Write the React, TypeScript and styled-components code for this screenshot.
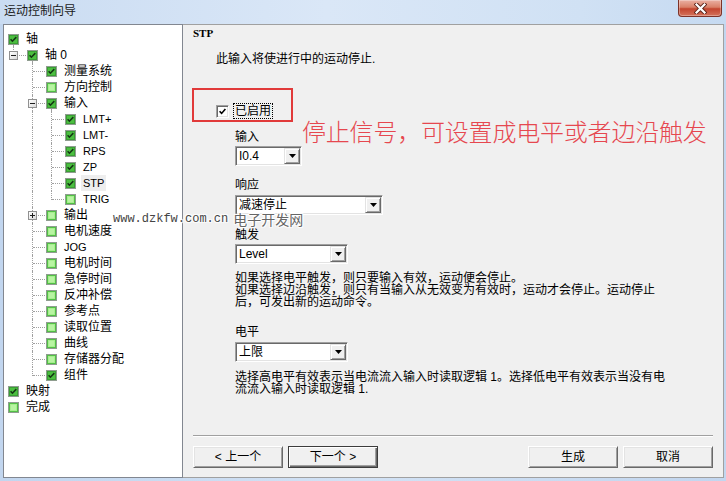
import React from 'react';
import styled, { createGlobalStyle, css } from 'styled-components';

const GlobalStyle = createGlobalStyle`
  html, body { margin: 0; padding: 0; }
  body {
    width: 726px; height: 481px; overflow: hidden;
    font-family: "Liberation Sans", "Noto Sans CJK SC", sans-serif;
    font-size: 12px; color: #000;
  }
`;

const UI = `"Liberation Sans", "Noto Sans CJK SC", sans-serif`;

const Window = styled.div`
  position: relative;
  width: 726px;
  height: 481px;
  display: flex;
  flex-direction: column;
  background: linear-gradient(to right, #c2d6ef, #d2e2f5 50%, #c2d6ef);
  overflow: hidden;
`;

const TitleBar = styled.div`
  height: 24px;
  flex: none;
  display: flex;
  align-items: flex-start;
  background: linear-gradient(to right, #cadcf2, #dae7f7 45%, #d0e1f4 80%, #c6daf1);
`;

const Title = styled.div`
  flex: 1;
  padding: 4px 0 0 4px;
  font-family: "Noto Sans CJK SC", sans-serif;
  font-size: 12px;
  line-height: 12px;
  color: #1a1a1a;
`;

const CloseButton = styled.div`
  width: 44px;
  height: 17px;
  margin-right: 4px;
  box-sizing: border-box;
  border: 1px solid #7d3228;
  border-top: none;
  border-radius: 0 0 4px 4px;
  background: linear-gradient(#eab0a3, #d98068 45%, #c3452f 55%, #d4735c);
  box-shadow: inset 0 0 0 1px rgba(255, 255, 255, 0.3);
  display: flex;
  align-items: center;
  justify-content: center;
`;

const Body = styled.div`
  flex: 1;
  min-height: 0;
  display: flex;
  margin: 0 2px 3px 3px;
`;

const TreePane = styled.div`
  width: 180px;
  flex: none;
  box-sizing: border-box;
  background: #fff;
  border: 1px solid #828790;
  padding-top: 6px;
  display: flex;
  flex-direction: column;
`;

const Row = styled.div`
  height: 16px;
  display: flex;
  align-items: flex-start;
  white-space: nowrap;
  flex: none;
`;

type GuideKind = 'none' | 'pass' | 'tee' | 'elbow';

const Guide = styled.span<{ $kind: GuideKind }>`
  position: relative;
  flex: none;
  width: 19px;
  height: 16px;
  ${(p) =>
    p.$kind !== 'none' &&
    css`
      &::before {
        content: "";
        position: absolute;
        left: 9px;
        top: 0;
        width: 0;
        height: ${p.$kind === 'elbow' ? '9px' : '16px'};
        border-left: 1px dotted #a0a0a0;
      }
    `}
  ${(p) =>
    (p.$kind === 'tee' || p.$kind === 'elbow') &&
    css`
      &::after {
        content: "";
        position: absolute;
        left: 10px;
        right: -3px;
        top: 8px;
        height: 0;
        border-top: 1px dotted #a0a0a0;
      }
    `}
`;

const Expander = styled.span<{ $open: boolean }>`
  position: absolute;
  left: 5px;
  top: 4px;
  width: 9px;
  height: 9px;
  box-sizing: border-box;
  border: 1px solid #919191;
  background: linear-gradient(135deg, #ffffff, #dadada);
  z-index: 1;
  &::before {
    content: "";
    position: absolute;
    left: 1px;
    top: 3px;
    width: 5px;
    height: 1px;
    background: #1e1e1e;
  }
  ${(p) =>
    !p.$open &&
    css`
      &::after {
        content: "";
        position: absolute;
        left: 3px;
        top: 1px;
        width: 1px;
        height: 5px;
        background: #1e1e1e;
      }
    `}
`;

const StateWrap = styled.span<{ $childLine: boolean }>`
  position: relative;
  flex: none;
  width: 11px;
  height: 11px;
  margin: 3px 0 0 4px;
  display: block;
  svg { display: block; }
  ${(p) =>
    p.$childLine &&
    css`
      &::after {
        content: "";
        position: absolute;
        left: 5px;
        top: 11px;
        height: 2px;
        border-left: 1px dotted #a0a0a0;
      }
    `}
`;

const NodeLabel = styled.span<{ $latin?: boolean; $selected?: boolean }>`
  margin-left: 5px;
  padding: 0 2px;
  height: 16px;
  font-family: ${UI};
  font-size: ${(p) => (p.$latin ? '11px' : '12px')};
  line-height: 16px;
  color: #000;
  background: ${(p) => (p.$selected ? '#eeeeee' : 'transparent')};
`;

const Panel = styled.div`
  position: relative;
  flex: 1;
  box-sizing: border-box;
  background: #f0f0f0;
  border: 1px solid #a0a0a0;
  border-left: none;
  padding: 2px 10px 9px 10px;
  display: flex;
  flex-direction: column;
`;

const Heading = styled.div`
  font-family: "Liberation Serif", serif;
  font-weight: bold;
  font-size: 11px;
  line-height: 13px;
`;

const Description = styled.div`
  margin: 13px 0 0 23px;
  font-family: ${UI};
  font-size: 12px;
  line-height: 13px;
`;

const Highlight = styled.div`
  margin: 22px 0 0 -1px;
  width: 101px;
  height: 34px;
  box-sizing: border-box;
  border: 2px solid #e13a3a;
  padding: 12px 0 0 22px;
  display: flex;
  align-items: center;
  align-self: flex-start;
`;

const ClassicCheck = styled.span`
  width: 13px;
  height: 13px;
  flex: none;
  box-sizing: border-box;
  background: #fff;
  border: 1px solid;
  border-color: #a0a0a0 #fff #fff #a0a0a0;
  box-shadow: inset 1px 1px 0 #696969, inset -1px -1px 0 #e3e3e3;
  display: flex;
  align-items: center;
  justify-content: center;
`;

const FocusLabel = styled.span`
  margin-left: 4px;
  padding: 0 1px;
  border: 1px dotted #000;
  font-family: ${UI};
  font-size: 12px;
  line-height: 14px;
`;

const FieldLabel = styled.div<{ $mt: number }>`
  margin: ${(p) => p.$mt}px 0 0 42px;
  font-family: ${UI};
  font-size: 12px;
  line-height: 13px;
`;

const Combo = styled.div<{ $w: number; $mt: number }>`
  width: ${(p) => p.$w}px;
  height: 20px;
  margin: ${(p) => p.$mt}px 0 0 42px;
  flex: none;
  box-sizing: border-box;
  background: #fff;
  border: 1px solid;
  border-color: #a0a0a0 #fff #fff #a0a0a0;
  box-shadow: inset 1px 1px 0 #696969, inset -1px -1px 0 #e3e3e3;
  padding: 0 1px 0 3px;
  display: flex;
  align-items: center;
`;

const ComboValue = styled.span`
  flex: 1;
  font-family: ${UI};
  font-size: 12px;
  line-height: 16px;
  white-space: nowrap;
  overflow: hidden;
`;

const ComboButton = styled.span`
  width: 16px;
  height: 16px;
  flex: none;
  box-sizing: border-box;
  background: #f0f0f0;
  border: 1px solid;
  border-color: #e3e3e3 #696969 #696969 #e3e3e3;
  box-shadow: inset 1px 1px 0 #fff, inset -1px -1px 0 #a0a0a0;
  display: flex;
  align-items: center;
  justify-content: center;
  svg { display: block; }
`;

const Paragraph = styled.div<{ $mt: number }>`
  margin: ${(p) => p.$mt}px 0 0 42px;
  font-family: ${UI};
  font-size: 12px;
  line-height: 12px;
  white-space: nowrap;
`;

const Spacer = styled.div`
  flex: 1;
`;

const Separator = styled.div`
  height: 0;
  border-top: 1px solid #a0a0a0;
  border-bottom: 1px solid #fff;
`;

const ButtonRow = styled.div`
  margin-top: 9px;
  display: flex;
  gap: 5px;
`;

const Button = styled.button<{ $default?: boolean; $push?: boolean }>`
  width: 90px;
  height: 22px;
  box-sizing: border-box;
  padding: 0;
  margin: 0 0 0 ${(p) => (p.$push ? 'auto' : '0')};
  font-family: ${UI};
  font-size: 12px;
  line-height: 16px;
  color: #000;
  background: #f0f0f0;
  border: 1px solid;
  border-color: ${(p) => (p.$default ? '#3c3c3c' : '#fff #696969 #696969 #fff')};
  box-shadow: ${(p) =>
    p.$default
      ? 'inset 1px 1px 0 #fff, inset -1px -1px 0 #696969, inset -2px -2px 0 #a0a0a0'
      : 'inset 1px 1px 0 #e3e3e3, inset -1px -1px 0 #a0a0a0'};
`;

const Annotation = styled.div`
  position: absolute;
  left: 119px;
  top: 94px;
  font-family: "Noto Sans CJK SC", sans-serif;
  font-weight: 300;
  font-size: 24px;
  line-height: 24px;
  letter-spacing: -0.2px;
  color: #e6474f;
  white-space: nowrap;
`;

const Watermark = styled.div`
  position: absolute;
  left: 113px;
  top: 210px;
  z-index: 10;
  display: flex;
  align-items: center;
  white-space: nowrap;
  text-shadow: 0 0 1px #fff, 0 0 2px #fff, 1px 1px 1px #fff, -1px -1px 1px #fff, 1px -1px 1px #fff, -1px 1px 1px #fff;
`;

const WatermarkUrl = styled.span`
  font-family: "Liberation Mono", monospace;
  font-size: 12px;
  line-height: 18px;
  color: #444;
`;

const WatermarkName = styled.span`
  margin-left: 5px;
  font-family: "Noto Sans CJK SC", sans-serif;
  font-size: 14px;
  line-height: 18px;
  color: #666;
`;

type TreeNode = {
  label: string;
  checked: boolean;
  latin?: boolean;
  selected?: boolean;
  collapsed?: boolean;
  children?: TreeNode[];
};

type FlatRow = {
  key: string;
  label: string;
  checked: boolean;
  latin?: boolean;
  selected?: boolean;
  guides: GuideKind[];
  expander?: 'minus' | 'plus';
  childLine: boolean;
};

const leaf = (label: string, checked = false, latin = false, selected = false): TreeNode => ({
  label,
  checked,
  latin,
  selected,
});

const tree: TreeNode[] = [
  {
    label: '轴',
    checked: true,
    children: [
      {
        label: '轴 0',
        checked: true,
        children: [
          leaf('测量系统', true),
          leaf('方向控制'),
          {
            label: '输入',
            checked: true,
            children: [
              leaf('LMT+', true, true),
              leaf('LMT-', true, true),
              leaf('RPS', true, true),
              leaf('ZP', true, true),
              leaf('STP', true, true, true),
              leaf('TRIG', false, true),
            ],
          },
          { label: '输出', checked: false, collapsed: true, children: [leaf('x')] },
          leaf('电机速度'),
          leaf('JOG', false, true),
          leaf('电机时间'),
          leaf('急停时间'),
          leaf('反冲补偿'),
          leaf('参考点'),
          leaf('读取位置'),
          leaf('曲线'),
          leaf('存储器分配'),
          leaf('组件', true),
        ],
      },
    ],
  },
  leaf('映射', true),
  leaf('完成'),
];

function flatten(nodes: TreeNode[], level: number, anc: boolean[], out: FlatRow[], prefix: string) {
  nodes.forEach((n, i) => {
    const hasNext = i < nodes.length - 1;
    const guides: GuideKind[] = [];
    if (level >= 1) {
      for (let c = 0; c < level - 1; c++) guides.push(anc[c] ? 'pass' : 'none');
      guides.push(hasNext ? 'tee' : 'elbow');
    }
    const expanded = !!n.children && !n.collapsed;
    out.push({
      key: `${prefix}-${i}`,
      label: n.label,
      checked: n.checked,
      latin: n.latin,
      selected: n.selected,
      guides,
      expander: n.children && level >= 1 ? (expanded ? 'minus' : 'plus') : undefined,
      childLine: expanded,
    });
    if (expanded) flatten(n.children!, level + 1, level >= 1 ? [...anc, hasNext] : anc, out, `${prefix}-${i}`);
  });
}

const rows: FlatRow[] = [];
flatten(tree, 0, [], rows, 'n');

function StateIcon({ checked }: { checked: boolean }) {
  return (
    <svg width="11" height="11" viewBox="0 0 11 11">
      <rect x="0.5" y="0.5" width="10" height="10" fill="#fff" stroke="#8f9d8f" />
      {checked ? (
        <>
          <rect x="1.5" y="1.5" width="8" height="8" fill="#4cbf40" stroke="#3a9f34" />
          <path d="M2.6 5.3 L4.4 7.2 L8.3 3.1" fill="none" stroke="#143814" strokeWidth="1.6" />
        </>
      ) : (
        <>
          <rect x="1.5" y="1.5" width="8" height="8" fill="#a6ee8e" stroke="#52c046" />
          <rect x="3" y="3" width="5" height="5" fill="#b8f4a2" />
        </>
      )}
    </svg>
  );
}

function ComboBox({ value, width, mt }: { value: string; width: number; mt: number }) {
  return (
    <Combo $w={width} $mt={mt}>
      <ComboValue>{value}</ComboValue>
      <ComboButton>
        <svg width="7" height="4" viewBox="0 0 7 4">
          <path d="M0 0 H7 L3.5 4 Z" fill="#000" />
        </svg>
      </ComboButton>
    </Combo>
  );
}

export default function App() {
  return (
    <>
      <GlobalStyle />
      <Window>
        <TitleBar>
          <Title>运动控制向导</Title>
          <CloseButton>
            <svg width="13" height="11" viewBox="0 0 13 11">
              <path d="M2.5 1.5 L10.5 9.5 M10.5 1.5 L2.5 9.5" stroke="#5b2219" strokeWidth="4" strokeLinecap="square" />
              <path d="M2.5 1.5 L10.5 9.5 M10.5 1.5 L2.5 9.5" stroke="#fff" strokeWidth="2.2" strokeLinecap="square" />
            </svg>
          </CloseButton>
        </TitleBar>
        <Body>
          <TreePane>
            {rows.map((r) => (
              <Row key={r.key}>
                {r.guides.map((g, gi) => (
                  <Guide key={gi} $kind={g}>
                    {gi === r.guides.length - 1 && r.expander && <Expander $open={r.expander === 'minus'} />}
                  </Guide>
                ))}
                <StateWrap $childLine={r.childLine}>
                  <StateIcon checked={r.checked} />
                </StateWrap>
                <NodeLabel $latin={r.latin} $selected={r.selected}>
                  {r.label}
                </NodeLabel>
              </Row>
            ))}
          </TreePane>
          <Panel>
            <Heading>STP</Heading>
            <Description>此输入将使进行中的运动停止.</Description>
            <Highlight>
              <ClassicCheck>
                <svg width="7" height="7" viewBox="0 0 7 7">
                  <path d="M0.6 3.2 L2.6 5.4 L6.4 0.9" fill="none" stroke="#000" strokeWidth="1.6" />
                </svg>
              </ClassicCheck>
              <FocusLabel>已启用</FocusLabel>
            </Highlight>
            <FieldLabel $mt={9}>输入</FieldLabel>
            <ComboBox value="I0.4" width={67} mt={2} />
            <FieldLabel $mt={13}>响应</FieldLabel>
            <ComboBox value="减速停止" width={148} mt={3} />
            <FieldLabel $mt={14}>触发</FieldLabel>
            <ComboBox value="Level" width={113} mt={2} />
            <Paragraph $mt={8}>
              如果选择电平触发，则只要输入有效，运动便会停止。
              <br />
              如果选择边沿触发，则只有当输入从无效变为有效时，运动才会停止。运动停止
              <br />
              后，可发出新的运动命令。
            </Paragraph>
            <FieldLabel $mt={18}>电平</FieldLabel>
            <ComboBox value="上限" width={113} mt={3} />
            <Paragraph $mt={9}>
              选择高电平有效表示当电流流入输入时读取逻辑 1。选择低电平有效表示当没有电
              <br />
              流流入输入时读取逻辑 1.
            </Paragraph>
            <Spacer />
            <Separator />
            <ButtonRow>
              <Button>&lt; 上一个</Button>
              <Button $default>下一个 &gt;</Button>
              <Button $push>生成</Button>
              <Button>取消</Button>
            </ButtonRow>
            <Annotation>停止信号，可设置成电平或者边沿触发</Annotation>
          </Panel>
        </Body>
        <Watermark>
          <WatermarkUrl>www.dzkfw.com.cn</WatermarkUrl>
          <WatermarkName>电子开发网</WatermarkName>
        </Watermark>
      </Window>
    </>
  );
}
